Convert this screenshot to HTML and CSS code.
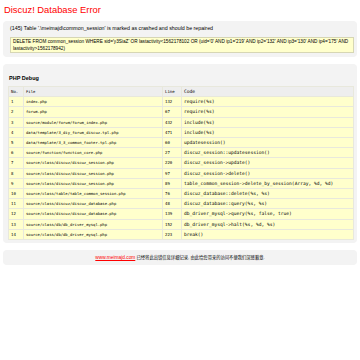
FILE: index.html
```html
<!DOCTYPE html>
<html>
<head>
<meta charset="utf-8">
<title>Discuz! Database Error</title>
<link rel="stylesheet" href="styles.css">
</head>
<body>
<h1>Discuz! Database Error</h1>

<div class="info">
(145) Table '.\meimajd\common_session' is marked as crashed and should be repaired
<div class="sql">DELETE FROM common_session WHERE sid='y3SiaZ' OR lastactivity&lt;1562178102 OR (uid='0' AND ip1='219' AND ip2='132' AND ip3='130' AND ip4='175' AND lastactivity&gt;1562178942)</div>
</div>

<div class="info debug">
<p class="debug-title">PHP Debug</p>
<table class="trace">
<tr class="bg2"><td class="no">No.</td><td class="file">File</td><td class="line">Line</td><td class="code">Code</td></tr>
<tr class="bg1"><td>1</td><td class="file">index.php</td><td>132</td><td class="code">require(%s)</td></tr>
<tr class="bg1"><td>2</td><td class="file">forum.php</td><td>67</td><td class="code">require(%s)</td></tr>
<tr class="bg1"><td>3</td><td class="file">source/module/forum/forum_index.php</td><td>432</td><td class="code">include(%s)</td></tr>
<tr class="bg1"><td>4</td><td class="file">data/template/3_diy_forum_discuz.tpl.php</td><td>471</td><td class="code">include(%s)</td></tr>
<tr class="bg1"><td>5</td><td class="file">data/template/3_3_common_footer.tpl.php</td><td>60</td><td class="code">updatesession()</td></tr>
<tr class="bg1"><td>6</td><td class="file">source/function/function_core.php</td><td>27</td><td class="code">discuz_session::updatesession()</td></tr>
<tr class="bg1"><td>7</td><td class="file">source/class/discuz/discuz_session.php</td><td>220</td><td class="code">discuz_session-&gt;update()</td></tr>
<tr class="bg1"><td>8</td><td class="file">source/class/discuz/discuz_session.php</td><td>97</td><td class="code">discuz_session-&gt;delete()</td></tr>
<tr class="bg1"><td>9</td><td class="file">source/class/discuz/discuz_session.php</td><td>89</td><td class="code">table_common_session-&gt;delete_by_session(Array, %d, %d)</td></tr>
<tr class="bg1"><td>10</td><td class="file">source/class/table/table_common_session.php</td><td>76</td><td class="code">discuz_database::delete(%s, %s)</td></tr>
<tr class="bg1"><td>11</td><td class="file">source/class/discuz/discuz_database.php</td><td>48</td><td class="code">discuz_database::query(%s, %s)</td></tr>
<tr class="bg1"><td>12</td><td class="file">source/class/discuz/discuz_database.php</td><td>139</td><td class="code">db_driver_mysql-&gt;query(%s, false, true)</td></tr>
<tr class="bg1"><td>13</td><td class="file">source/class/db/db_driver_mysql.php</td><td>152</td><td class="code">db_driver_mysql-&gt;halt(%s, %d, %s)</td></tr>
<tr class="bg1"><td>14</td><td class="file">source/class/db/db_driver_mysql.php</td><td>223</td><td class="code">break()</td></tr>
</table>
</div>

<div class="help"><a href="#">www.meimajd.com</a> 已经将此出错信息详细记录, 由此给您带来的访问不便我们深感歉意.</div>
</body>
</html>
```

FILE: styles.css
```css
body {
    margin: 3px;
    background-color: white;
    color: black;
    font-family: 'Liberation Sans', Arial, sans-serif;
    font-size: 5.3px;
    line-height: 7px;
}
h1 {
    color: #FF0000;
    font-family: 'Liberation Sans', Arial, sans-serif;
    font-weight: normal;
    font-size: 9.4px;
    line-height: 12px;
    margin: 1px 0 5px 1px;
}
.info {
    background: #F3F3F3;
    border-radius: 4px;
    padding: 4px 3px 4px 7px;
    margin-bottom: 7px;
}
.sql {
    background: #FFFFCC;
    border: 1px solid #d6d6b4;
    font-size: 4.7px;
    line-height: 6.5px;
    margin-top: 5px;
    padding: 1px 2px 0;
}
.debug {
    padding: 6px 3px 3px 5px;
}
.debug-title {
    font-weight: bold;
    font-size: 5.5px;
    margin: 5px 0 4px 1px;
}
table.trace {
    width: 100%;
    border-collapse: separate;
    border-spacing: 1px;
    background-color: #e8e8dc;
    font-family: 'DejaVu Sans Mono', 'Liberation Mono', monospace;
    font-size: 4px;
}
table.trace td {
    padding: 2px 2px;
    line-height: 5.2px;
}
/* the path column prints a touch narrower than the code column */
table.trace td.file { font-size: 3.85px; }
table.trace td.code { font-size: 4.6px; }
.bg1 { background-color: #FFFFCC; }
.bg2 { background-color: #EEEEEE; }
td.no { width: 10px; }
td.file { width: 134px; }
td.line { width: 14px; }
.help {
    background: #F3F3F3;
    border-radius: 4px;
    font-family: 'Liberation Sans', 'Noto Sans CJK SC', sans-serif;
    font-size: 4.3px;
    text-align: center;
    line-height: 7px;
    padding: 4px;
}
.help a {
    color: red;
    font-size: 4.8px;
}
```
